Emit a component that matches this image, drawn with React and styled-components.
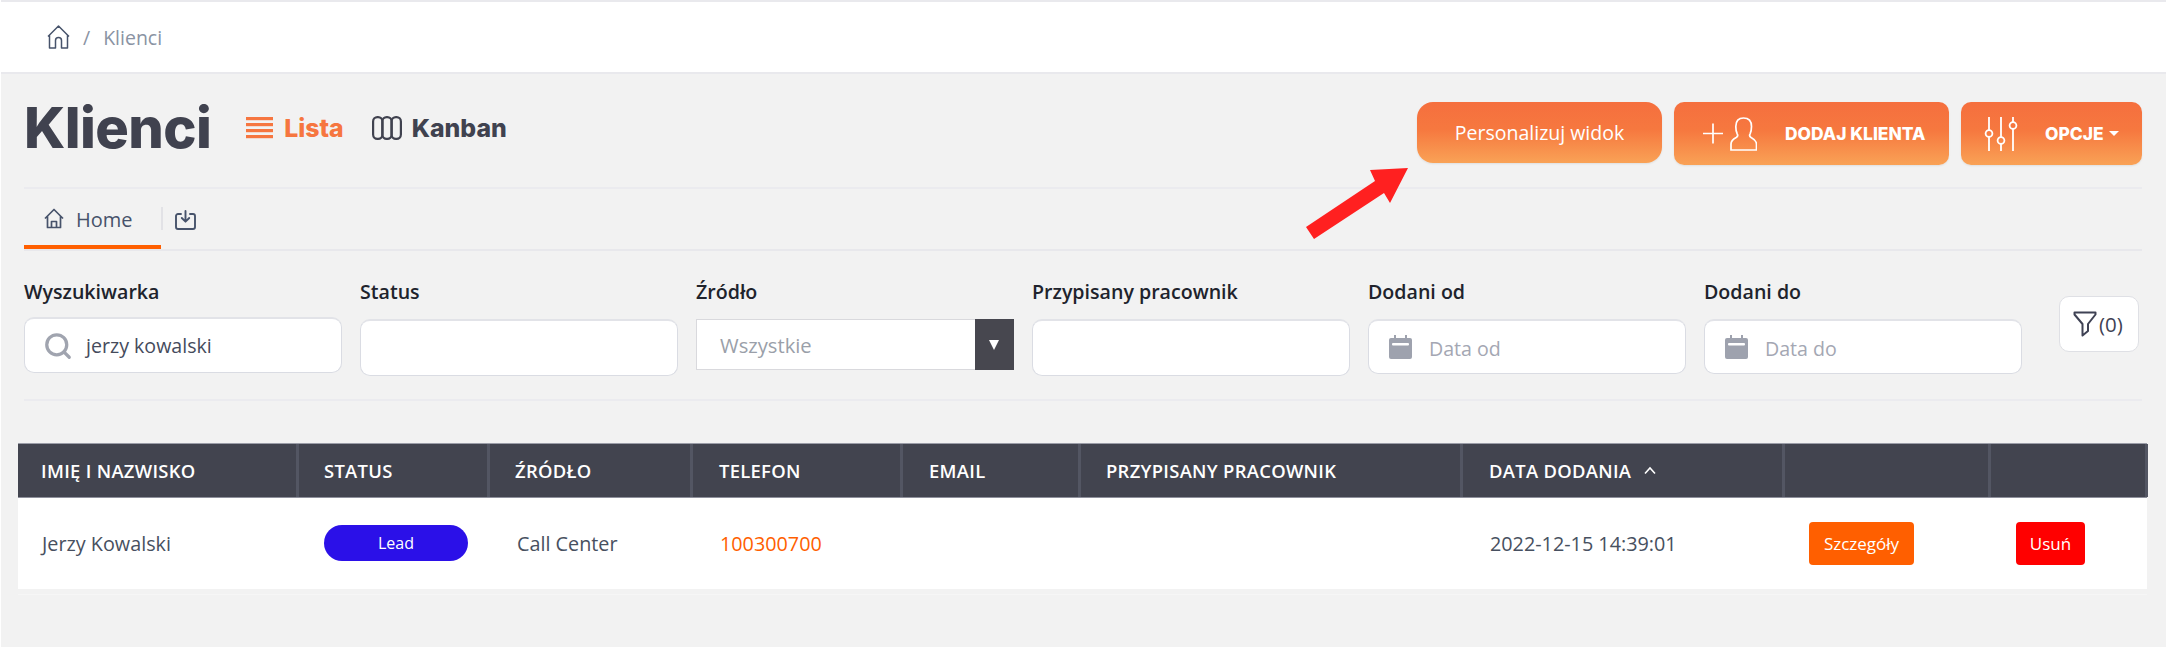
import React from 'react';
import styled, { createGlobalStyle } from 'styled-components';
import { Search } from 'lucide-react';

const GlobalStyle = createGlobalStyle`
  html, body {
    margin: 0;
    padding: 0;
    background: #f2f2f2;
  }
  * {
    box-sizing: border-box;
  }
`;

const Page = styled.div`
  position: relative;
  width: 2166px;
  height: 647px;
  overflow: hidden;
  background: #f2f2f2;
  border-left: 1px solid #fff;
  font-family: "Open Sans", "Noto Sans", sans-serif;
  color: #3f4254;
`;

const Breadcrumb = styled.div`
  height: 74px;
  margin-left: -1px;
  background: #fff;
  border-top: 2px solid #e9e9ed;
  border-bottom: 2px solid #e9e9ed;
  padding: 0 0 0 47px;
  display: flex;
  align-items: center;
  font-size: 19.5px;
  color: #8a93a3;
`;

const Slash = styled.span`
  margin: 0 13px 0 13px;
`;

const Content = styled.div`
  padding: 0 24px 0 23px;
`;

const HeaderRow = styled.div`
  height: 115px;
  padding-top: 28px;
  display: flex;
  justify-content: space-between;
  align-items: flex-start;
  border-bottom: 2px solid #ebebef;
`;

const TitleGroup = styled.div`
  display: flex;
  align-items: center;
  height: 52px;
`;

const Title = styled.h1`
  margin: 0 35px 0 0;
  font-family: Inter, sans-serif;
  font-weight: 800;
  font-size: 56px;
  letter-spacing: -0.6px;
  line-height: 52px;
  color: #40424f;
`;

const ViewLink = styled.a`
  display: flex;
  align-items: center;
  gap: ${(p) => (p.$active ? 11 : 10)}px;
  margin-right: 28px;
  font-family: Inter, sans-serif;
  font-weight: 800;
  font-size: 24.8px;
  color: ${(p) => (p.$active ? '#f67640' : '#40424f')};
`;

const Actions = styled.div`
  display: flex;
  gap: 12px;
  align-items: flex-start;
`;

const GradientButton = styled.button`
  height: ${(p) => p.$h}px;
  width: ${(p) => p.$w}px;
  padding: 0 0 0 ${(p) => p.$pad || 0}px;
  border: 0;
  border-radius: ${(p) => p.$radius}px;
  background: linear-gradient(180deg, #f56f3e 0%, #f6783f 45%, #f9a256 100%);
  color: #fff;
  display: flex;
  align-items: center;
  justify-content: ${(p) => (p.$pad ? 'flex-start' : 'center')};
  box-shadow: 0 1px 2px rgba(0, 0, 0, 0.08);
  font-family: inherit;
  font-size: 19.5px;
`;

const StrongLabel = styled.span`
  font-family: Inter, sans-serif;
  font-weight: 800;
  font-size: 17.4px;
  margin-left: ${(p) => p.$left}px;
`;

const Caret = styled.span`
  width: 0;
  height: 0;
  margin-left: 5px;
  border-left: 5px solid transparent;
  border-right: 5px solid transparent;
  border-top: 5px solid #fff;
`;

const Tabs = styled.div`
  height: 62px;
  display: flex;
  align-items: flex-start;
  border-bottom: 2px solid #e8e8ec;
`;

const Tab = styled.div`
  width: 137px;
  height: 60px;
  padding: 19px 0 0 20px;
  display: flex;
  gap: 12px;
  align-items: flex-start;
  font-size: 20px;
  line-height: 24px;
  color: #47536b;
  border-bottom: 4px solid #ff5f00;
  margin-bottom: -1px;
`;

const TabDivider = styled.div`
  width: 2px;
  height: 23px;
  margin: 18px 12px 0 0;
  background: #e2e2e6;
`;

const TabIcon = styled.div`
  padding-top: 21px;
  line-height: 0;
`;

const Filters = styled.div`
  height: 150px;
  display: grid;
  grid-template-columns: repeat(6, 317.5px) 80px;
  column-gap: 18.5px;
  align-items: start;
  border-bottom: 2px solid #ebebef;
`;

const Field = styled.div`
  padding-top: 27px;
`;

const Label = styled.div`
  height: ${(p) => p.$h}px;
  font-size: 19.6px;
  font-weight: 600;
  line-height: 27px;
  color: #20232c;
`;

const InputBox = styled.div`
  height: ${(p) => p.$h}px;
  background: #fff;
  border: 1px solid #dadce3;
  border-top: 2px solid #e2e3e8;
  border-radius: 10px;
  display: flex;
  align-items: center;
  padding-left: ${(p) => p.$pad || 20}px;
  gap: ${(p) => p.$gap || 0}px;
  font-size: 19.6px;
  color: #454b5c;
`;

const SelectBox = styled.div`
  height: 51px;
  background: #fff;
  border: 1px solid #d9d9dd;
  display: flex;
  align-items: center;
  justify-content: space-between;
  padding-left: 23px;
  font-size: 20.2px;
  color: #9a9fa9;
`;

const SelectArrow = styled.div`
  width: 39px;
  height: 51px;
  margin-right: -1px;
  background: #47474f;
  display: flex;
  align-items: center;
  justify-content: center;

  &::after {
    content: '';
    border-left: 5.5px solid transparent;
    border-right: 5.5px solid transparent;
    border-top: 10px solid #fff;
  }
`;

const Placeholder = styled.span`
  color: #a4a7b3;
  padding-top: 2px;
`;

const FilterButton = styled.button`
  margin-top: 45px;
  margin-left: 19px;
  height: 56px;
  width: 80px;
  background: #fff;
  border: 1px solid #dfe0e5;
  border-radius: 10px;
  padding: 0 0 0 13px;
  display: flex;
  align-items: center;
  gap: 2px;
  font-family: inherit;
  font-size: 20.5px;
  color: #3f4254;
`;

const TableWrap = styled.div`
  margin: 42px 19px 0 17px;
`;

const columns = '281px 191px 203px 210px 178px 382px 322px 206px 157px';

const HeadRow = styled.div`
  display: grid;
  grid-template-columns: ${columns};
  height: 55px;
  background: #42444f;
  border-top: 1px solid #9b9da8;
  border-bottom: 1px solid #8e909c;
`;

const HeadCell = styled.div`
  display: flex;
  align-items: center;
  gap: 12px;
  padding-left: ${(p) => p.$pad || 25}px;
  border-right: 3px solid #535663;
  font-size: 18.4px;
  font-weight: 600;
  letter-spacing: 0.3px;
  color: #fff;
`;

const BodyRow = styled.div`
  display: grid;
  grid-template-columns: ${columns};
  height: 91px;
  background: #fff;
`;

const BodyCell = styled.div`
  display: flex;
  align-items: center;
  padding-left: ${(p) => p.$pad || 27}px;
  padding-bottom: 1px;
  font-size: 19.8px;
  color: ${(p) => p.$color || '#475060'};
`;

const Badge = styled.span`
  width: 144px;
  height: 36px;
  border-radius: 18px;
  background: #2b10e8;
  color: #fff;
  font-size: 16px;
  display: flex;
  align-items: center;
  justify-content: center;
`;

const ActionButton = styled.button`
  width: ${(p) => p.$w}px;
  height: 43px;
  border: 0;
  border-radius: 4px;
  padding: 0;
  background: ${(p) => p.$bg};
  color: #fff;
  font-family: inherit;
  font-size: 17px;
`;

const RowEdge = styled.div`
  height: 1px;
  margin-top: 5px;
  background: #f6f6f6;
`;

const ArrowOverlay = styled.svg`
  position: absolute;
  left: 1300px;
  top: 160px;
`;

const HomeOutline = () => (
  <svg width="23" height="24" viewBox="0 0 23 24" fill="none" stroke="#47536b" strokeWidth="1.5" strokeLinejoin="round">
    <path d="M1 11.5 11.5 1 22 11.5M2.5 10.5V23h6v-7.5a3 3 0 0 1 6 0V23h6V10.5" />
  </svg>
);

const HomeSmall = () => (
  <svg width="20" height="21" viewBox="0 0 20 21" fill="none" stroke="#47536b" strokeWidth="1.7" strokeLinejoin="round">
    <path d="M1 10.5 10 1.5l9 9M3.5 8.5V19.5h13V8.5" />
    <path d="M7.5 19.5v-6h5v6" />
  </svg>
);

const TrayIcon = () => (
  <svg width="21" height="20" viewBox="0 0 21 20" fill="none" stroke="#47536b" strokeWidth="1.9" strokeLinecap="round" strokeLinejoin="round">
    <path d="M6 4H3a2 2 0 0 0-2 2v11a2 2 0 0 0 2 2h15a2 2 0 0 0 2-2V6a2 2 0 0 0-2-2h-3" />
    <path d="M10.5 1v10M6.8 8l3.7 3.7L14.2 8" />
  </svg>
);

const ListIcon = () => (
  <svg width="27" height="22" viewBox="0 0 27 22" fill="#f67640">
    <rect y="0" width="27" height="3.2" />
    <rect y="6" width="27" height="3.2" />
    <rect y="12" width="27" height="3.2" />
    <rect y="18" width="27" height="3.2" />
  </svg>
);

const KanbanIcon = () => (
  <svg width="30" height="24" viewBox="0 0 30 24" fill="none" stroke="#40424f" strokeWidth="2.2">
    <rect x="1.100" y="1.100" width="9.300" height="21.800" rx="4.300" />
    <rect x="10.400" y="1.100" width="9.200" height="21.800" rx="4.300" />
    <rect x="19.600" y="1.100" width="9.300" height="21.800" rx="4.300" />
  </svg>
);

const PlusPerson = () => (
  <svg width="56" height="34" viewBox="0 0 56 34" fill="none" stroke="#fff" strokeWidth="1.7">
    <path d="M2 16.500h20M12 6.500v20" />
    <path d="M30 33v-6c0-3 1.600-4.400 5.200-6.400 2-1.200 2-2 1-3.800-1-1.900-1.400-4-1.400-7.300C34.800 4 37.500 1 42.500 1s8 3 8 8.500c0 3.300-.4 5.400-1.400 7.300-1 1.800-1 2.600 1 3.800 3.600 2 5.400 3.400 5.400 6.400v6z" />
  </svg>
);

const SlidersIcon = () => (
  <svg width="34" height="34" viewBox="0 0 34 34" fill="none" stroke="#fff" strokeWidth="1.8">
    <path d="M5 0v13M5 20v14M17 0v20M17 27v7M29 0v5M29 12v22" />
    <circle cx="5" cy="16.500" r="3.400" />
    <circle cx="17" cy="23.500" r="3.400" />
    <circle cx="29" cy="8.500" r="3.400" />
  </svg>
);

const CalendarIcon = () => (
  <svg width="23" height="24" viewBox="0 0 23 24" fill="#9ea2ae">
    <rect x="5" y="0" width="2" height="5" />
    <rect x="16" y="0" width="2" height="5" />
    <path d="M2 3h19a2 2 0 0 1 2 2v17a2 2 0 0 1-2 2H2a2 2 0 0 1-2-2V5a2 2 0 0 1 2-2z" />
    <rect x="3" y="8" width="17" height="2.500" rx="1" fill="#fff" />
  </svg>
);

const FunnelIcon = () => (
  <svg width="24" height="26" viewBox="0 0 24 26" fill="none" stroke="#3f4254" strokeWidth="2" strokeLinejoin="round">
    <path d="M1.500 1.500h21v2L15 13v7l-5.500 4.500V13L1.500 3.500z" />
  </svg>
);

const ChevronUp = () => (
  <svg width="14" height="9" viewBox="0 0 14 9" fill="none" stroke="#fff" strokeWidth="1.6">
    <path d="M2 7.500 7 2l5 5.500" />
  </svg>
);

const headers = [
  { text: 'IMIĘ I NAZWISKO', pad: 23 },
  { text: 'STATUS', pad: 25 },
  { text: 'ŹRÓDŁO', pad: 25 },
  { text: 'TELEFON', pad: 26 },
  { text: 'EMAIL', pad: 26 },
  { text: 'PRZYPISANY PRACOWNIK', pad: 25 },
  { text: 'DATA DODANIA', pad: 26, sorted: true },
  { text: '' },
  { text: '' },
];

function App() {
  return (
    <Page>
      <GlobalStyle />
      <Breadcrumb>
        <HomeOutline />
        <Slash>/</Slash>
        Klienci
      </Breadcrumb>
      <Content>
        <HeaderRow>
          <TitleGroup>
            <Title>Klienci</Title>
            <ViewLink $active>
              <ListIcon />
              Lista
            </ViewLink>
            <ViewLink>
              <KanbanIcon />
              Kanban
            </ViewLink>
          </TitleGroup>
          <Actions>
            <GradientButton $w={245} $h={61} $radius={16}>Personalizuj widok</GradientButton>
            <GradientButton $w={275} $h={63} $radius={10} $pad={27}>
              <PlusPerson />
              <StrongLabel $left={28}>DODAJ KLIENTA</StrongLabel>
            </GradientButton>
            <GradientButton $w={181} $h={63} $radius={10} $pad={23}>
              <SlidersIcon />
              <StrongLabel $left={27}>OPCJE</StrongLabel>
              <Caret />
            </GradientButton>
          </Actions>
        </HeaderRow>
        <Tabs>
          <Tab>
            <HomeSmall />
            Home
          </Tab>
          <TabDivider />
          <TabIcon>
            <TrayIcon />
          </TabIcon>
        </Tabs>
        <Filters>
          <Field>
            <Label $h={39}>Wyszukiwarka</Label>
            <InputBox $h={56} $pad={18} $gap={13}>
              <Search size={30} color="#a0a4af" strokeWidth={2.6} />
              jerzy kowalski
            </InputBox>
          </Field>
          <Field>
            <Label $h={41}>Status</Label>
            <InputBox $h={57} />
          </Field>
          <Field>
            <Label $h={41}>Źródło</Label>
            <SelectBox>
              Wszystkie
              <SelectArrow />
            </SelectBox>
          </Field>
          <Field>
            <Label $h={41}>Przypisany pracownik</Label>
            <InputBox $h={57} />
          </Field>
          <Field>
            <Label $h={41}>Dodani od</Label>
            <InputBox $h={55} $gap={17}>
              <CalendarIcon />
              <Placeholder>Data od</Placeholder>
            </InputBox>
          </Field>
          <Field>
            <Label $h={41}>Dodani do</Label>
            <InputBox $h={55} $gap={17}>
              <CalendarIcon />
              <Placeholder>Data do</Placeholder>
            </InputBox>
          </Field>
          <FilterButton>
            <FunnelIcon />
            (0)
          </FilterButton>
        </Filters>
      </Content>
      <TableWrap>
        <HeadRow>
          {headers.map((h, index) => (
            <HeadCell key={index} $pad={h.pad}>
              {h.text}
              {h.sorted && <ChevronUp />}
            </HeadCell>
          ))}
        </HeadRow>
        <BodyRow>
          <BodyCell $pad={24}>Jerzy Kowalski</BodyCell>
          <BodyCell $pad={25}>
            <Badge>Lead</Badge>
          </BodyCell>
          <BodyCell>Call Center</BodyCell>
          <BodyCell $color="#ff5f00">100300700</BodyCell>
          <BodyCell />
          <BodyCell />
          <BodyCell>2022-12-15 14:39:01</BodyCell>
          <BodyCell $pad={24}>
            <ActionButton $w={105} $bg="#ff5f00">Szczegóły</ActionButton>
          </BodyCell>
          <BodyCell $pad={25}>
            <ActionButton $w={69} $bg="#ff0000">Usuń</ActionButton>
          </BodyCell>
        </BodyRow>
        <RowEdge />
      </TableWrap>
      <ArrowOverlay width="110" height="82" viewBox="0 0 110 82">
        <polygon points="107,8 69,10 74,21 5,67 13,79 83,33 89,43" fill="#ff2020" />
      </ArrowOverlay>
    </Page>
  );
}

export default App;
